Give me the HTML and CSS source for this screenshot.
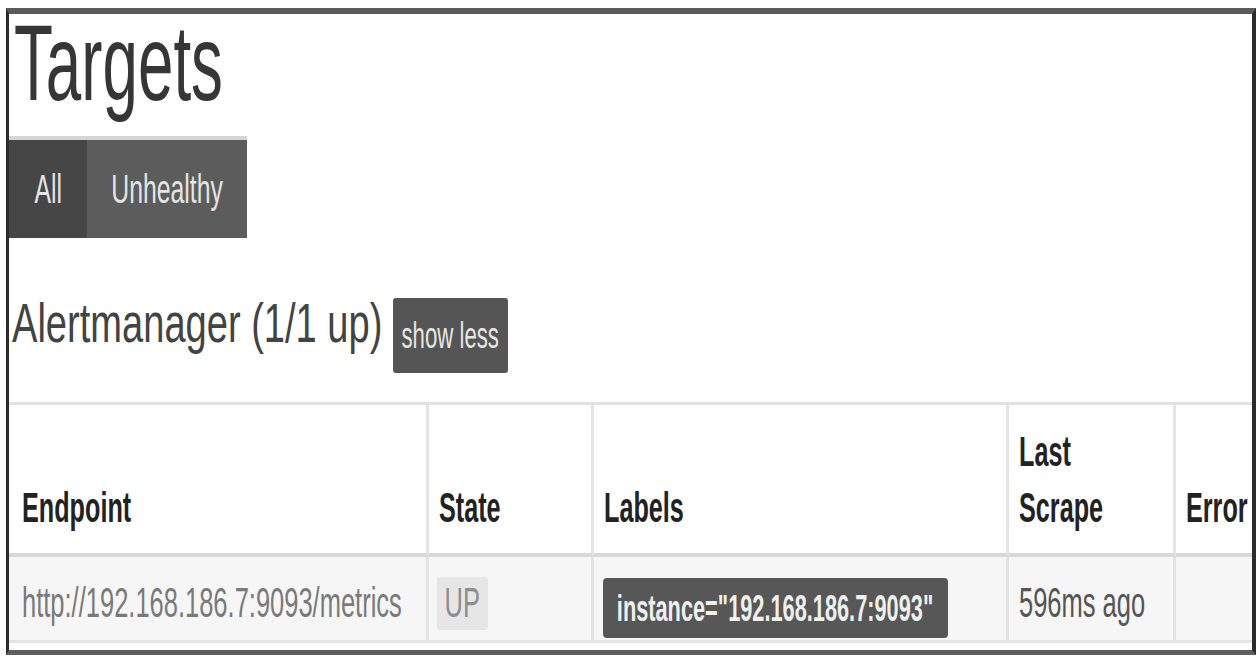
FILE: index.html
```html
<!DOCTYPE html>
<html lang="en">
<head>
<meta charset="utf-8">
<title>Targets</title>
<link rel="stylesheet" href="styles.css">
</head>
<body>
<div class="page">
  <h1 class="title"><span class="sx sx-h1">Targets</span></h1>

  <div class="filters">
    <button class="filter filter-all"><span class="sx sx-btn">All</span></button>
    <button class="filter filter-unhealthy"><span class="sx sx-btn">Unhealthy</span></button>
  </div>

  <div class="job-head">
    <h2 class="job-title"><span class="sx sx-h2">Alertmanager (1/1 up)</span></h2>
    <button class="toggle"><span class="sx sx-toggle">show less</span></button>
  </div>

  <table class="targets">
    <colgroup>
      <col class="c-endpoint">
      <col class="c-state">
      <col class="c-labels">
      <col class="c-scrape">
      <col class="c-error">
    </colgroup>
    <thead>
      <tr>
        <th><span class="sx sx-th">Endpoint</span></th>
        <th><span class="sx sx-th">State</span></th>
        <th><span class="sx sx-th">Labels</span></th>
        <th><span class="sx sx-th">Last<br>Scrape</span></th>
        <th><span class="sx sx-th">Error</span></th>
      </tr>
    </thead>
    <tbody>
      <tr>
        <td><a class="endpoint" href="#"><span class="sx sx-td">http://192.168.186.7:9093/metrics</span></a></td>
        <td><div class="state-up"><span class="sx sx-up">UP</span></div></td>
        <td><div class="label"><span class="sx sx-label">instance="192.168.186.7:9093"</span></div></td>
        <td><span class="sx sx-td scrape">596ms ago</span></td>
        <td></td>
      </tr>
    </tbody>
  </table>
</div>
</body>
</html>
```
FILE: styles.css
```css
* { box-sizing: border-box; }

html, body {
  margin: 0;
  padding: 0;
  background: #fff;
}

body {
  font-family: "Liberation Sans", Arial, sans-serif;
  color: #333;
}

.page {
  margin: 8px 2px 0 6px;
  height: 647px;
  border-top: 6px solid #5b5b5b;
  border-bottom: 5px solid #5e5e5e;
  border-left: 3px solid #2b2b2b;
  border-right: 4px solid #2b2b2b;
  background: #fff;
}

/* horizontally condensed text, matching the squeezed screenshot */
.sx {
  display: inline-block;
  white-space: nowrap;
  transform-origin: 0 50%;
}
.sx-h1 { transform: scaleX(.59); }
.sx-h2 { transform: scaleX(.68); }
.sx-btn { transform: scaleX(.62); transform-origin: 50% 50%; }
.sx-toggle { transform: scaleX(.6); transform-origin: 50% 50%; }
.sx-th { transform: scaleX(.6); }
.sx-td { transform: scaleX(.607); }
.sx-up { transform: scaleX(.607); transform-origin: 50% 50%; }
.sx-label { transform: scaleX(.588); transform-origin: 50% 50%; }

.title {
  margin: 4px 0 0;
  padding-left: 5px;
  font-size: 108px;
  line-height: 90px;
  font-weight: normal;
  color: #363636;
}

.filters {
  display: flex;
  width: max-content;
  margin-top: 28px;
  border-top: 4px solid #d5d5d5;
}

.filter {
  display: flex;
  align-items: center;
  justify-content: center;
  height: 98px;
  margin: 0;
  padding: 0;
  border: 0;
  font: 40px/1 "Liberation Sans", Arial, sans-serif;
  color: #e4e4e4;
  overflow: visible;
}
.filter-all { width: 78px; background: #464646; }
.filter-unhealthy { width: 160px; background: #5c5c5c; }

.job-head {
  display: flex;
  align-items: flex-start;
  margin-top: 53px;
  padding-left: 3px;
}

.job-title {
  width: 371px;
  margin: 0 10px 0 0;
  font-size: 56px;
  line-height: 64px;
  font-weight: normal;
  color: #434343;
  white-space: nowrap;
}

.toggle {
  display: flex;
  align-items: center;
  justify-content: center;
  width: 115px;
  height: 75px;
  margin: 7px 0 0;
  padding: 0;
  border: 0;
  border-radius: 3px;
  background: #555;
  color: #e6e6e6;
  font: 37px/1 "Liberation Sans", Arial, sans-serif;
  overflow: visible;
}

.targets {
  width: 100%;
  margin-top: 29px;
  border-collapse: separate;
  border-spacing: 0;
  table-layout: fixed;
  border-top: 3px solid #e2e2e2;
}

.c-endpoint { width: 420px; }
.c-state { width: 165px; }
.c-labels { width: 415px; }
.c-scrape { width: 167px; }
.c-error { width: 76px; }

.targets th,
.targets td {
  text-align: left;
  padding-left: 10px;
  padding-right: 10px;
  border-right: 3px solid #e4e4e4;
}
.targets th:last-child,
.targets td:last-child { border-right: 0; }
.targets th:first-child,
.targets td:first-child { padding-left: 13px; }

.targets thead tr { height: 152px; }

.targets th {
  vertical-align: bottom;
  padding-top: 0;
  padding-bottom: 17px;
  border-bottom: 4px solid #d8d8d8;
  font-size: 42px;
  line-height: 56px;
  font-weight: bold;
  color: #222;
}

.targets tbody tr { height: 86px; }

.targets td {
  vertical-align: middle;
  padding-top: 9px;
  padding-bottom: 0;
  background: #f6f6f6;
  border-bottom: 3px solid #e4e4e4;
  font-size: 42px;
  line-height: 56px;
}

.endpoint {
  color: #7a7a7a;
  text-decoration: none;
}

.scrape { color: #555; }

.state-up {
  display: flex;
  align-items: center;
  justify-content: center;
  width: 51px;
  height: 53px;
  margin-left: -2px;
  background: #e6e6e6;
  color: #8e8e8e;
  border-radius: 3px;
  line-height: 1;
}

.label {
  display: flex;
  align-items: center;
  justify-content: center;
  width: 345px;
  height: 60px;
  margin: 10px 0 0 -1px;
  background: #575757;
  color: #f0f0f0;
  border-radius: 4px;
  font-size: 37px;
  font-weight: bold;
  line-height: 1;
}
```
